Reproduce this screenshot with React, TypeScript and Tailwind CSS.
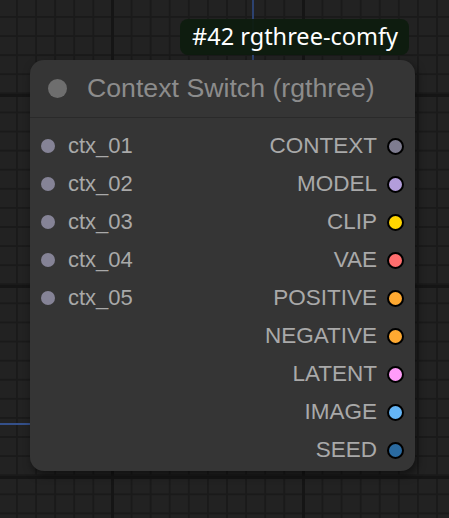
import React from "react";

const inputs = ["ctx_01", "ctx_02", "ctx_03", "ctx_04", "ctx_05"];

const outputs = [
  { name: "CONTEXT", color: "bg-[#7e7c90]" },
  { name: "MODEL", color: "bg-[#b39ddb]" },
  { name: "CLIP", color: "bg-[#ffd500]" },
  { name: "VAE", color: "bg-[#ff6e6e]" },
  { name: "POSITIVE", color: "bg-[#ffa931]" },
  { name: "NEGATIVE", color: "bg-[#ffa931]" },
  { name: "LATENT", color: "bg-[#ff9cf9]" },
  { name: "IMAGE", color: "bg-[#64b5f6]" },
  { name: "SEED", color: "bg-[#2a6aa0]" },
];

const App: React.FC = () => {
  return (
    <div className="relative w-[449px] h-[518px] overflow-hidden bg-[#222222] bg-[image:linear-gradient(#1a1a1a_2px,transparent_2px),linear-gradient(90deg,#1a1a1a_2px,transparent_2px)] bg-[size:19.1px_19.1px] bg-[position:16px_16px] font-['Liberation_Sans',Arial,sans-serif]">
      {/* 굵은 그리드 라인 */}
      <div className="absolute inset-0 bg-[image:linear-gradient(90deg,#151515_3px,transparent_3px)] bg-[size:191px_100%] bg-[position:111px_0]" />
      <div className="absolute inset-0 bg-[image:linear-gradient(#151515_3px,transparent_3px)] bg-[size:100%_191px] bg-[position:0_94px]" />

      {/* 링크 */}
      <div className="absolute left-[252px] top-0 w-[2px] h-[60px] bg-[#2c4270]" />
      <div className="absolute left-0 top-[423px] w-[30px] h-[2px] bg-[#34508a]" />

      <div className="relative flex flex-col pt-[19px]">
        {/* 뱃지 */}
        <div className="flex justify-end pr-[40px]">
          <div className="h-[36px] pl-[12px] pr-[11px] rounded-[8px] bg-[#0e1c0f]/95 flex items-center text-white text-[23.5px] font-['Noto_Sans',sans-serif] leading-none">
            #42 rgthree-comfy
          </div>
        </div>

        {/* 노드 */}
        <div className="ml-[30px] mt-[5px] w-[385px] h-[411px] rounded-[14px] bg-[#353535] shadow-[2px_4px_8px_rgba(0,0,0,0.5)] flex flex-col">
          <div className="h-[58px] flex items-center border-b border-[#2a2a2a] pl-[18px] gap-[20px]">
            <div className="w-[19px] h-[19px] rounded-full bg-[#6e6e6e]" />
            <span className="text-[26.7px] text-[#8c8c8c] leading-none">Context Switch (rgthree)</span>
          </div>

          <div className="flex justify-between pt-[9px]">
            <div className="flex flex-col">
              {inputs.map((n) => (
                <div key={n} className="h-[38px] flex items-center pl-[11px] gap-[13px]">
                  <div className="w-[14px] h-[14px] rounded-full bg-[#858396]" />
                  <span className="text-[22px] text-[#a9a9a9] leading-none">{n}</span>
                </div>
              ))}
            </div>
            <div className="flex flex-col items-end">
              {outputs.map((o) => (
                <div key={o.name} className="h-[38px] flex items-center pr-[11px] gap-[10px]">
                  <span className="text-[22.5px] text-[#a9a9a9] leading-none">{o.name}</span>
                  <div className={`w-[17px] h-[17px] rounded-full border-2 border-black ${o.color}`} />
                </div>
              ))}
            </div>
          </div>
        </div>
      </div>
    </div>
  );
};

export default App;
